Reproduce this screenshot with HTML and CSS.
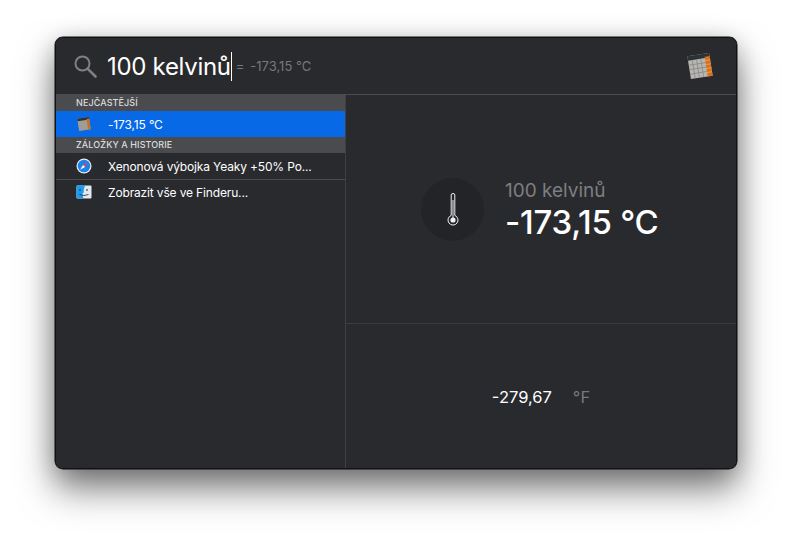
FILE: index.html
```html
<!DOCTYPE html>
<html lang="cs">
<head>
    <title>Spotlight</title>
    <link rel="stylesheet" href="styles.css">
</head>
<body>
<div class="window">
    <div class="search">
        <svg class="search-icon" width="24" height="24" viewBox="0 0 24 24">
            <circle cx="9.5" cy="9.5" r="7" fill="none" stroke="#7f8082" stroke-width="2"/>
            <path d="M14.8 14.8L22.5 22.5" stroke="#7f8082" stroke-width="2.6" stroke-linecap="round"/>
        </svg>
        <span class="query">100 kelvinů</span>
        <span class="caret"></span>
        <span class="equals">=</span>
        <span class="inline-result">-173,15 °C</span>
        <svg class="calc calc-big" width="28" height="30" viewBox="0 0 28 30">
            <g transform="rotate(-9 14 15)">
                <rect x="3" y="3.5" width="22" height="23" fill="#b7b6b3"/>
                <rect x="3" y="3.5" width="22" height="4.5" fill="#2a3335"/>
                <rect x="20" y="6.500" width="5" height="20" fill="#d9711c"/>
                <path d="M3 12.500h17M3 17h17M3 21.500h17M7.300 8v18.500M11.600 8v18.500M15.900 8v18.500" stroke="#858482" stroke-width=".7"/>
                <path d="M20 10.500h5M20 14.500h5M20 18.500h5M20 22.500h5" stroke="#f4b67c" stroke-width=".6"/>
            </g>
        </svg>
    </div>
    <div class="content">
        <div class="sidebar">
            <div class="section">NEJČASTĚJŠÍ</div>
            <div class="row selected">
                <svg class="calc" width="16" height="16" viewBox="0 0 28 30">
                    <g transform="rotate(-9 14 15)">
                        <rect x="3" y="3.500" width="22" height="23" fill="#a09d98"/>
                        <rect x="3" y="3.500" width="22" height="4.500" fill="#2a3335"/>
                        <rect x="20" y="6.500" width="5" height="20" fill="#c9702a"/>
                    </g>
                </svg>
                <span>-173,15 °C</span>
            </div>
            <div class="section">ZÁLOŽKY A HISTORIE</div>
            <div class="row">
                <svg class="safari" width="16" height="16" viewBox="0 0 16 16">
                    <circle cx="8" cy="8" r="7.500" fill="#e8eef5"/>
                    <circle cx="8" cy="8" r="6.300" fill="#1f82e8"/>
                    <path d="M11.800 4.200L9 9 7 7z" fill="#f0453a"/>
                    <path d="M4.200 11.800L7 7 9 9z" fill="#fff"/>
                </svg>
                <span>Xenonová výbojka Yeaky +50% Po...</span>
            </div>
            <div class="row divided">
                <svg class="finder" width="16" height="16" viewBox="0 0 16 16">
                    <rect x=".5" y="1.500" width="15" height="13" rx="1" fill="#e4e9ef"/>
                    <path d="M1.500 1.500H9Q7.500 5 7.600 9H6.500Q6.700 12 7.500 14.500H1.500a1 1 0 0 1-1-1v-11a1 1 0 0 1 1-1z" fill="#1c9bf0"/>
                    <path d="M4 5v2M11 5v2" stroke="#1d2b3a" stroke-width="1"/>
                    <path d="M3.500 10.500Q8 12.500 12.500 10.500" fill="none" stroke="#1d2b3a" stroke-width=".8"/>
                </svg>
                <span>Zobrazit vše ve Finderu...</span>
            </div>
        </div>
        <div class="detail">
            <div class="detail-top">
                <div class="thermo-badge">
                    <svg width="14" height="34" viewBox="0 0 14 34">
                        <path d="M5.200 3a1.800 1.500 0 0 1 3.600 0V23.400a5 5 0 1 1-3.600 0z" fill="none" stroke="#f0f0f0" stroke-width="1"/>
                        <path d="M7 8V26" stroke="#f0f0f0" stroke-width="1"/>
                        <circle cx="7" cy="28" r="2.600" fill="#f0f0f0"/>
                    </svg>
                </div>
                <div class="conversion">
                    <div class="from">100 kelvinů</div>
                    <div class="to">-173,15 °C</div>
                </div>
            </div>
            <div class="detail-bottom">
                <span class="value">-279,67</span>
                <span class="unit">°F</span>
            </div>
        </div>
    </div>
</div>
</body>
</html>
```

FILE: styles.css
```css
html, body {
  height: 100%;
}
body {
  margin: 0;
  padding: 37px 55px 0;
  box-sizing: border-box;
  background-color: #fff;
  font-family: "Inter", "Liberation Sans", sans-serif;
  overflow: hidden;
}
.window {
  display: flex;
  flex-direction: column;
  width: 682px;
  height: 432px;
  box-sizing: border-box;
  background-color: #292a2e;
  border: 1px solid #5c5d60;
  border-radius: 8px;
  outline: 1px solid #111;
  outline-offset: -1px;
  box-shadow: 0 0 0 .5px #111, 0 20px 36px rgba(0, 0, 0, .5), 0 4px 24px rgba(0, 0, 0, .2);
  color: #fff;
}
.search {
  display: flex;
  align-items: center;
  flex: none;
  height: 56px;
  padding: 0 22px 0 17px;
  border-bottom: 1px solid #4b4c4f;
}
.search-icon {
  flex: none;
  margin-right: 10px;
}
.query {
  font-size: 24px;
  letter-spacing: -.3px;
}
.caret {
  width: 1px;
  height: 29px;
  margin: 0 4px 0 0;
  background-color: #fff;
}
.equals, .inline-result {
  color: #77787a;
  font-size: 13px;
}
.equals {
  margin-right: 6px;
}
.calc-big {
  margin-left: auto;
}
.content {
  display: flex;
  flex: 1;
  min-height: 0;
}
.sidebar {
  flex: none;
  width: 289px;
  border-right: 1px solid #3f4043;
  font-size: 12px;
}
.section {
  height: 16px;
  line-height: 16px;
  padding-left: 20px;
  background-color: #4a4b4e;
  color: #dcdcdd;
  font-size: 9px;
  font-weight: 500;
  letter-spacing: .1px;
}
.row {
  display: flex;
  align-items: center;
  height: 26px;
  padding-left: 20px;
  letter-spacing: -.15px;
}
.row svg {
  flex: none;
  margin-right: 16px;
}
.selected {
  background-color: #0869e6;
}
.divided {
  height: 24px;
  border-top: 1px solid #4b4c4f;
  box-sizing: content-box;
}
.detail {
  display: flex;
  flex-direction: column;
  flex: 1;
}
.detail-top {
  display: flex;
  align-items: center;
  flex: none;
  height: 229px;
  padding: 0 0 0 75px;
  box-sizing: border-box;
  border-bottom: 1px solid #3c3d40;
}
.thermo-badge {
  display: flex;
  align-items: center;
  justify-content: center;
  flex: none;
  width: 63px;
  height: 63px;
  margin-right: 21px;
  border-radius: 50%;
  background-color: #232427;
}
.conversion {
  margin-top: 4px;
}
.from {
  color: #7d7e80;
  font-size: 19px;
  line-height: 22px;
}
.to {
  font-size: 33px;
  line-height: 40px;
  font-weight: 500;
  letter-spacing: -.25px;
}
.detail-bottom {
  display: flex;
  flex: 1;
  align-items: center;
  justify-content: center;
  gap: 21px;
  padding-top: 2px;
  font-size: 16.500px;
}
.unit {
  color: #77787a;
}
```
